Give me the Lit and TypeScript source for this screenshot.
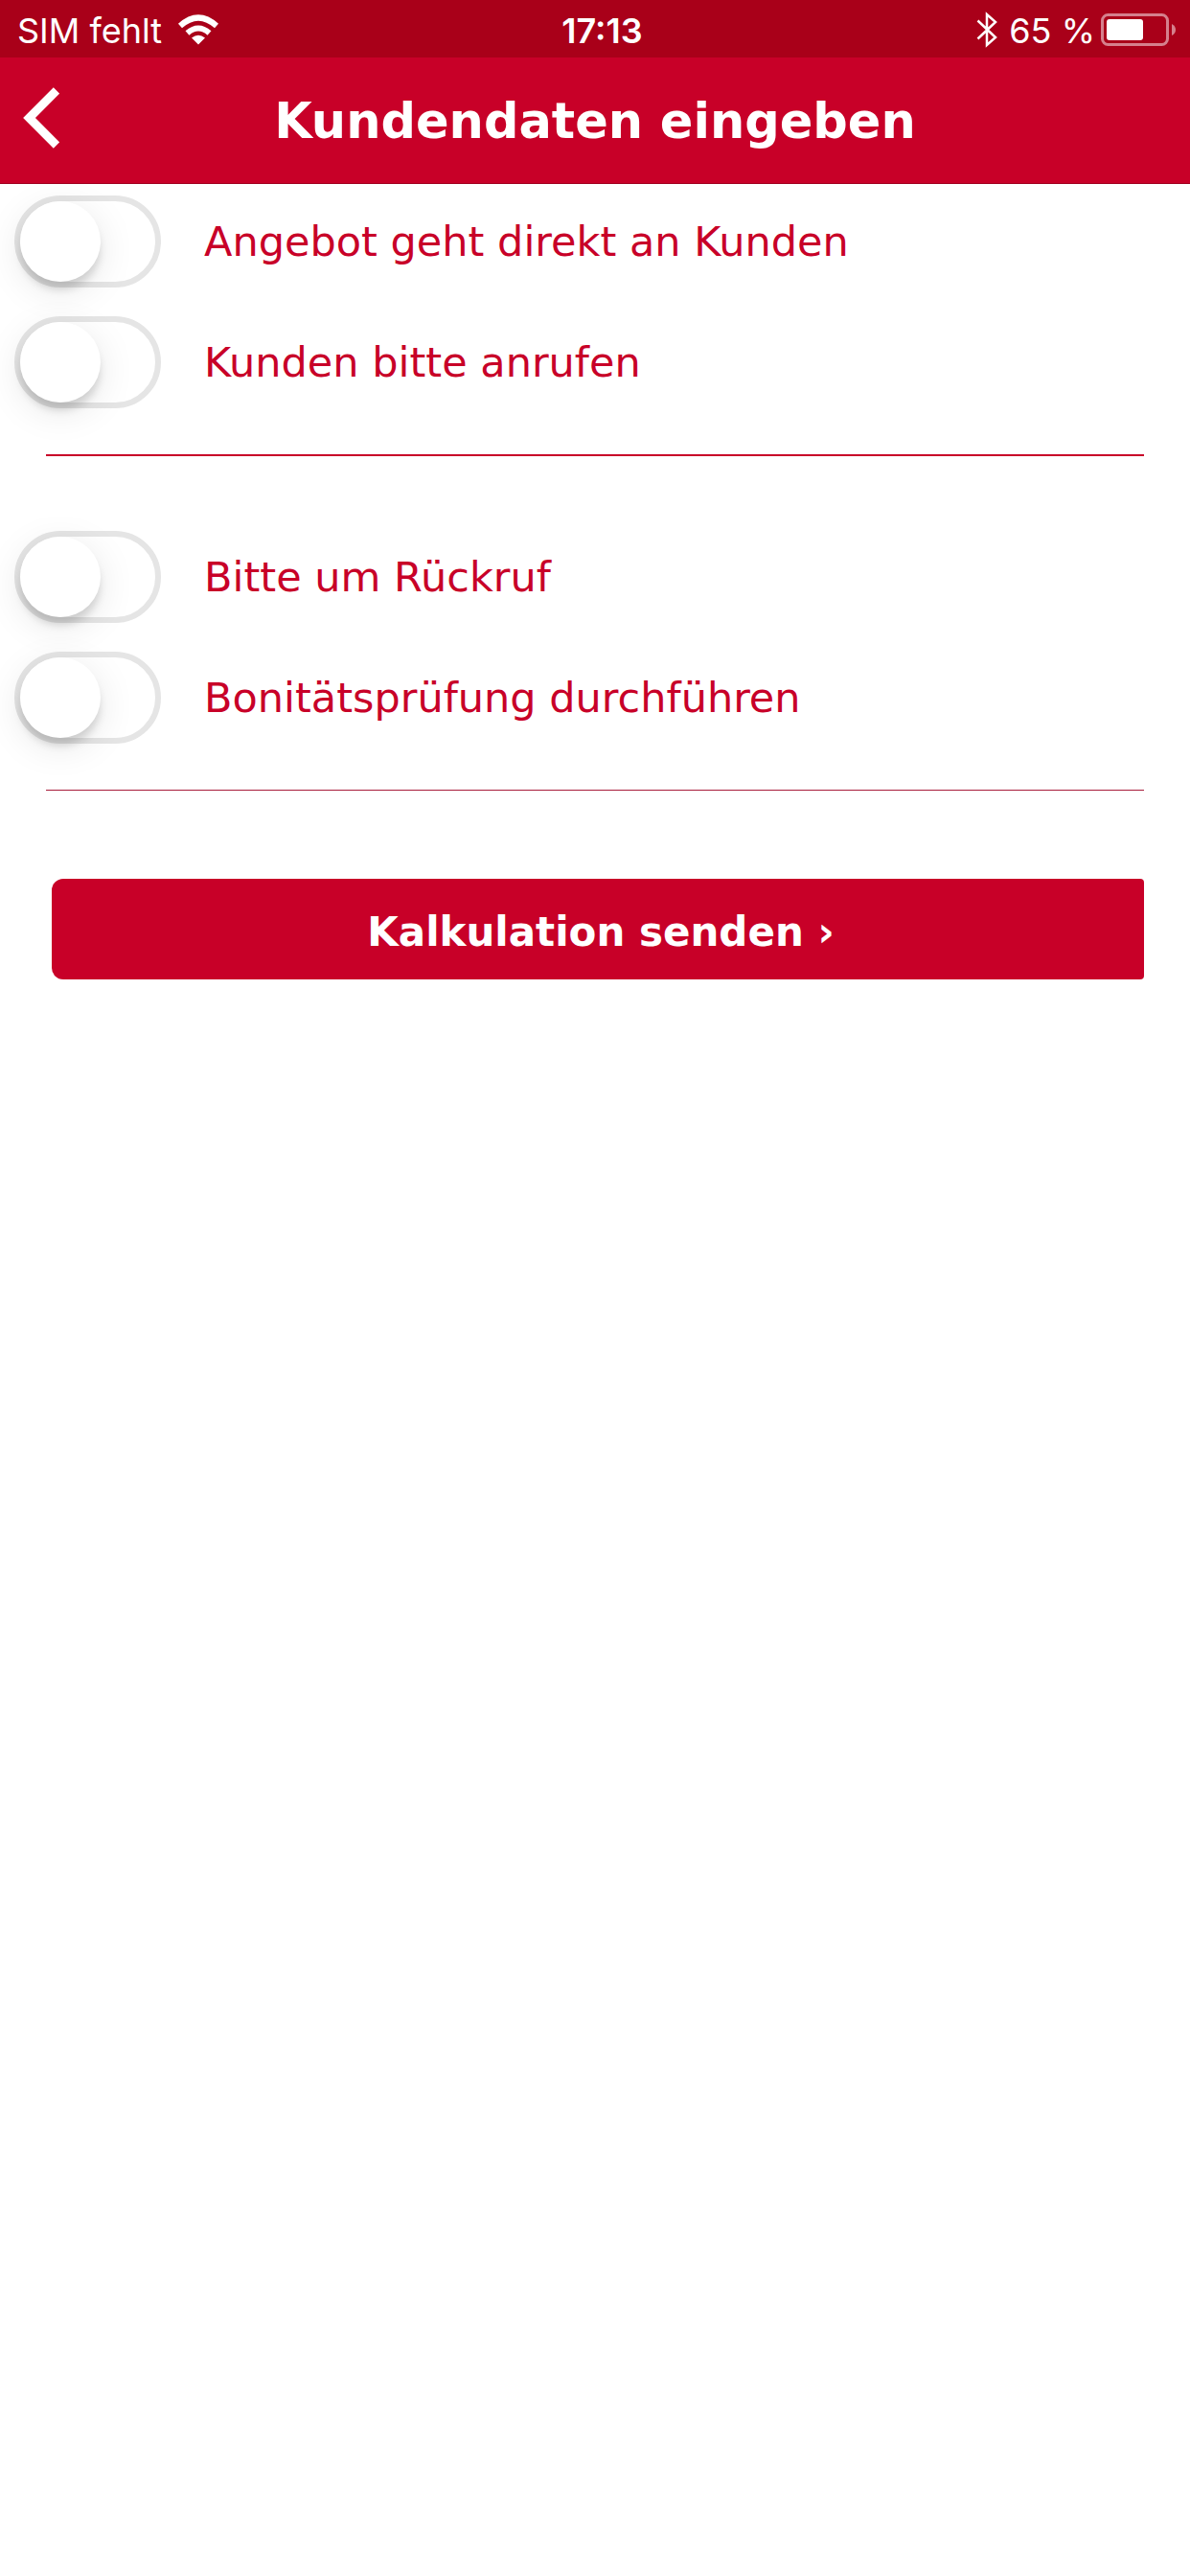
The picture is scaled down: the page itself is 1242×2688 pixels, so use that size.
import { LitElement, css, html, svg } from "lit";
import { customElement, property, state } from "lit/decorators.js";

@customElement("toggle-row")
export class ToggleRow extends LitElement {
  @property() label = "";
  @property({ type: Boolean }) checked = false;

  static styles = css`
    :host {
      display: block;
    }
    .row {
      display: flex;
      align-items: center;
      gap: 45px;
      padding: 12px 15px 18px;
    }
    .switch {
      appearance: none;
      flex: none;
      box-sizing: border-box;
      width: 153px;
      height: 96px;
      margin: 0;
      border: 6px solid #e5e5e5;
      border-radius: 48px;
      background: transparent;
    }
    .switch::before {
      content: "";
      display: block;
      width: 84px;
      height: 84px;
      border-radius: 50%;
      background: #fff;
      box-shadow:
        0 9px 9px -1px rgba(0, 0, 0, 0.14),
        0 9px 39px rgba(0, 0, 0, 0.1);
    }
    .switch:checked {
      border-color: #c80028;
      background: #c80028;
    }
    .switch:checked::before {
      margin-left: auto;
    }
    .text {
      color: #c80028;
      font-size: 43px;
      line-height: 48px;
    }
  `;

  private toggle(event: Event) {
    this.checked = (event.target as HTMLInputElement).checked;
  }

  render() {
    return html`
      <div class="row">
        <input
          id="switch"
          class="switch"
          type="checkbox"
          .checked=${this.checked}
          @change=${this.toggle}
        />
        <label class="text" for="switch">${this.label}</label>
      </div>
    `;
  }
}

@customElement("status-bar")
export class StatusBar extends LitElement {
  @property({ type: Number }) level = 65;

  static styles = css`
    :host {
      display: block;
    }
    .bar {
      display: grid;
      grid-template-columns: 1fr auto 1fr;
      align-items: center;
      height: 60px;
      padding: 0 15px 0 18px;
      background: #a90019;
      color: #fff;
      font-family: Inter, "Liberation Sans", sans-serif;
      font-size: 36px;
      line-height: 60px;
    }
    .side {
      display: flex;
      align-items: center;
      gap: 16px;
    }
    .end {
      justify-content: flex-end;
      gap: 6px;
    }
    .label,
    .time {
      padding-top: 2px;
    }
    .time {
      padding-left: 12px;
      font-weight: 600;
    }
    .percent {
      padding-left: 6px;
    }
    .icon {
      display: block;
      flex: none;
    }
  `;

  render() {
    const fill = svg`<rect x="6" y="6" width=${Math.round((59 * this.level) / 100)} height="22" rx="3" fill="#fff" />`;
    return html`
      <div class="bar">
        <div class="side">
          <span class="label">SIM fehlt</span>
          <svg class="icon" width="44" height="32" viewBox="0 0 44 32" aria-hidden="true">
            <g fill="none" stroke="#fff" stroke-width="6">
              <path d="M3 12 Q22 -5 41 12" />
              <path d="M10.500 19.500 Q22 9.500 33.500 19.500" />
            </g>
            <path d="M15 24.500 Q22 19 29 24.500 L22 31.500Z" fill="#fff" />
          </svg>
        </div>
        <span class="time">17:13</span>
        <div class="side end">
          <svg class="icon" width="22" height="38" viewBox="0 0 22 38" aria-hidden="true">
            <path
              d="M1.500 9.500 L20 27 L11 35 V3 L20 11 L1.500 28.500"
              fill="none"
              stroke="#fff"
              stroke-width="2.500"
            />
          </svg>
          <span class="label percent">${this.level} %</span>
          <svg class="icon" width="78" height="34" viewBox="0 0 78 34" aria-hidden="true">
            <rect x="1.500" y="1.500" width="68" height="31" rx="6" fill="none" stroke="#d5808d" stroke-width="3" />
            <path d="M74 11 Q78 13 78 17 T74 23Z" fill="#d5808d" />
            ${fill}
          </svg>
        </div>
      </div>
    `;
  }
}

@customElement("app-root")
export class AppRoot extends LitElement {
  @state() private groups = [
    ["Angebot geht direkt an Kunden", "Kunden bitte anrufen"],
    ["Bitte um Rückruf", "Bonitätsprüfung durchführen"],
  ];

  static styles = css`
    :host {
      display: block;
      min-height: 100vh;
      background: #fff;
      font-family: Verdana, "DejaVu Sans", sans-serif;
    }
    .header {
      display: grid;
      grid-template-columns: 72px 1fr 72px;
      align-items: center;
      box-sizing: border-box;
      height: 132px;
      border-bottom: 1px solid #a00020;
      background: #c80028;
      color: #fff;
    }
    .back {
      display: flex;
      padding: 0 0 6px 24px;
      border: 0;
      background: none;
    }
    .title {
      margin: 0;
      padding-top: 3px;
      font-size: 51px;
      line-height: 60px;
      text-align: center;
      white-space: nowrap;
    }
    .form {
      display: flex;
      flex-direction: column;
    }
    .rule {
      height: 2px;
      margin: 30px 48px 66px;
      border: 0;
      background: #c80028;
    }
    .thin {
      height: 1px;
      margin-bottom: 92px;
      background: #a81c3a;
    }
    .send {
      height: 105px;
      margin: 0 48px 0 54px;
      padding: 6px 0 0 6px;
      border: 0;
      border-radius: 12px 4px 4px 12px;
      background: #c80028;
      color: #fff;
      font-family: inherit;
      font-size: 42px;
      font-weight: 700;
      line-height: 48px;
    }
  `;

  render() {
    return html`
      <status-bar></status-bar>
      <header class="header">
        <button class="back" aria-label="Zurück">
          <svg width="38" height="64" viewBox="0 0 38 64" aria-hidden="true">
            <path d="M35 3.500 L6.500 32 L35 60.500" fill="none" stroke="#fff" stroke-width="9" />
          </svg>
        </button>
        <h1 class="title">Kundendaten eingeben</h1>
      </header>
      <main class="form">
        ${this.groups.map(
          (labels, index) => html`
            <div class="group">
              ${labels.map((label) => html`<toggle-row label=${label}></toggle-row>`)}
            </div>
            <hr class=${index ? "rule thin" : "rule"} />
          `,
        )}
        <button class="send">Kalkulation senden ›</button>
      </main>
    `;
  }
}
